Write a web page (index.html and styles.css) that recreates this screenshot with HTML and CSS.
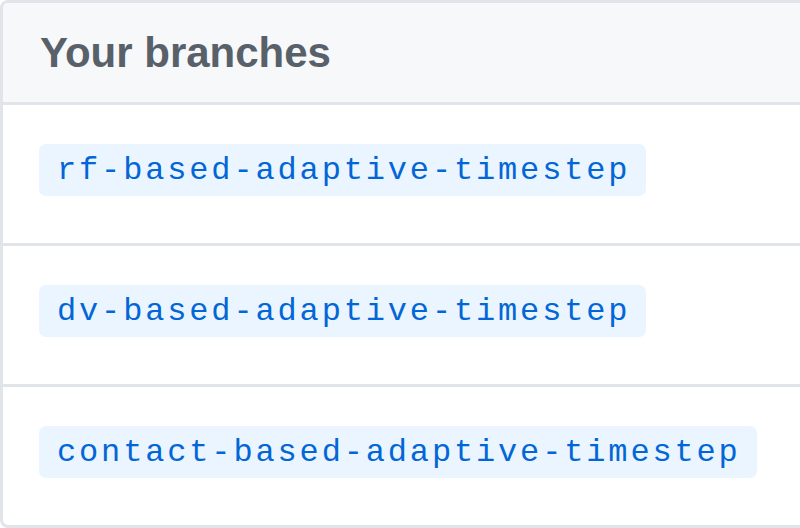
FILE: index.html
```html
<!DOCTYPE html>
<html>
<head>
<meta charset="utf-8">
<link rel="stylesheet" href="styles.css">
</head>
<body>
<div class="box">
  <div class="box-header"><h3 class="title">Your branches</h3></div>
  <div class="box-row"><span class="branch-name">rf-based-adaptive-timestep</span></div>
  <div class="box-row"><span class="branch-name">dv-based-adaptive-timestep</span></div>
  <div class="box-row"><span class="branch-name">contact-based-adaptive-timestep</span></div>
</div>
</body>
</html>
```
FILE: styles.css
```css
html, body {
  margin: 0;
  padding: 0;
  background: #ffffff;
  overflow: hidden;
}
.box {
  width: 840px;
  height: 528px;
  box-sizing: border-box;
  border: 3px solid #e1e4e8;
  border-radius: 8px;
  background: #ffffff;
  font-family: "Liberation Sans", Arial, sans-serif;
}
.box-header {
  height: 102px;
  box-sizing: border-box;
  padding: 0 37px;
  display: flex;
  align-items: center;
  background: #f6f8fa;
  border-bottom: 3px solid #e1e4e8;
  border-radius: 5px 5px 0 0;
}
.title {
  margin: 0;
  font-size: 42px;
  line-height: 48px;
  font-weight: 700;
  color: #586069;
}
.box-row {
  height: 141px;
  box-sizing: border-box;
  padding: 39px 36px 0;
  display: flex;
  align-items: flex-start;
  border-bottom: 3px solid #e1e4e8;
}
.box-row:last-child {
  height: 138px;
  border-bottom: none;
}
.branch-name {
  display: inline-flex;
  align-items: center;
  height: 52px;
  box-sizing: border-box;
  padding: 1px 16px 0 18px;
  font-family: "Liberation Mono", "Courier New", monospace;
  font-size: 32px;
  letter-spacing: 2.85px;
  color: #0366d6;
  background: #eaf5ff;
  border-radius: 7px;
}
```
